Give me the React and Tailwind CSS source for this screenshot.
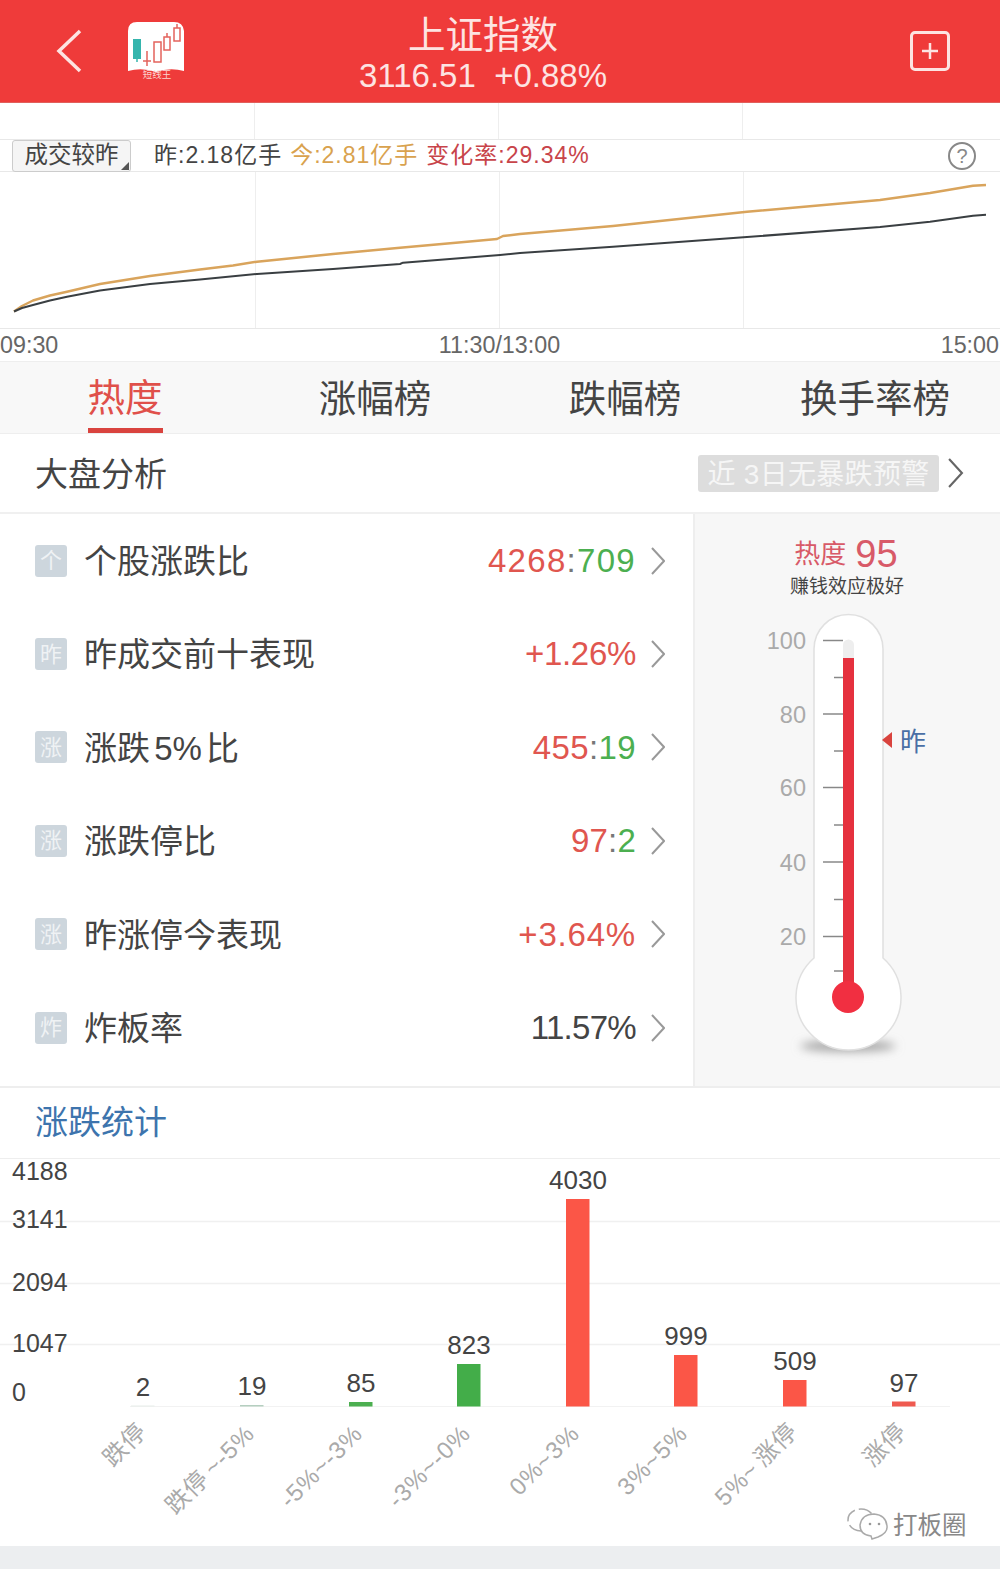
const ROWS = [
  { icon: "个", label: "个股涨跌比", value: [["4268", "text-[#e0564f]"], [":", "text-[#777]"], ["709", "text-[#4caf50]"]], cls: "tracking-[1.3px]" },
  { icon: "昨", label: "昨成交前十表现", value: [["+1.26%", "text-[#e0564f]"]], cls: "tracking-[-0.3px]" },
  { icon: "涨", label: "涨跌 5% 比", value: [["455", "text-[#e0564f]"], [":", "text-[#777]"], ["19", "text-[#4caf50]"]], cls: "tracking-[0.4px]" },
  { icon: "涨", label: "涨跌停比", value: [["97", "text-[#e0564f]"], [":", "text-[#777]"], ["2", "text-[#4caf50]"]], cls: "tracking-[0.2px]" },
  { icon: "涨", label: "昨涨停今表现", value: [["+3.64%", "text-[#e0564f]"]], cls: "tracking-[0.8px]" },
  { icon: "炸", label: "炸板率", value: [["11.57%", "text-[#444]"]], cls: "tracking-[-0.7px]" },
];

const TABS = ["热度", "涨幅榜", "跌幅榜", "换手率榜"];

const ORANGE = "14,311.5 22,306 33,300.5 50,295.5 67,291.7 100,284 150,276 200,269.500 233,265.500 257,261.7 333,254 400,247.7 467,241.7 497,239 503,236 520,234 613,226 747,211.7 880,200 930,193 973,185.7 986,185";
const BLACK = "14,311.5 22,308 33,305 50,300.5 67,296.7 100,290.500 150,284 200,279.500 257,274 333,269 400,264 403,262.7 500,255 520,253 613,246.7 747,237 880,227 930,221.7 973,215.7 986,214.7";

const BARS = [
  { x: 131, top: 1404.5, color: "#e8eeea", value: "2", labelY: 1395, name: "跌停", endX: 148, endY: 1432 },
  { x: 240, top: 1404, color: "#b5cfc0", value: "19", labelY: 1394, name: "跌停 ~-5%", endX: 256, endY: 1434 },
  { x: 349, top: 1401, color: "#4caf50", value: "85", labelY: 1391, name: "-5%~-3%", endX: 364, endY: 1434 },
  { x: 457, top: 1363, color: "#43ad49", value: "823", labelY: 1353, name: "-3%~-0%", endX: 472, endY: 1434 },
  { x: 566, top: 1198, color: "#fb5647", value: "4030", labelY: 1188, name: "0%~3%", endX: 581, endY: 1434 },
  { x: 674, top: 1354, color: "#fb5647", value: "999", labelY: 1344, name: "3%~5%", endX: 689, endY: 1434 },
  { x: 783, top: 1379, color: "#fb5647", value: "509", labelY: 1369, name: "5%~ 涨停", endX: 799, endY: 1432 },
  { x: 892, top: 1400.5, color: "#ef5a50", value: "97", labelY: 1391, name: "涨停", endX: 908, endY: 1432 },
];

function Chevron({ className }) {
  return (
    <svg className={className} viewBox="0 0 14 28" fill="none" stroke="currentColor" strokeWidth="2">
      <path d="M1 1 L13 14 L1 27" />
    </svg>
  );
}

function Logo() {
  return (
    <svg width="58" height="58" viewBox="128 23 58 58" className="ml-[46px] shrink-0">
      <path d="M137 23 H174 Q183 23 184 32 V72 Q170 68 156 73 Q142 68 128 72 V32 Q128 23 137 23 Z" fill="#fff" />
      <path d="M137 60 V63" stroke="#35b5ad" strokeWidth="1.5" />
      <rect x="133" y="40" width="8" height="20" fill="#35b5ad" />
      <path d="M147 52 V67 M143 62 H151" stroke="#e4635c" strokeWidth="1.5" />
      <rect x="154" y="43" width="7" height="20" fill="#fff" stroke="#e4635c" strokeWidth="1.5" />
      <rect x="164" y="38" width="6" height="13" fill="#fff" stroke="#e4635c" strokeWidth="1.5" />
      <rect x="174" y="29" width="6" height="13" fill="#fff" stroke="#e4635c" strokeWidth="1.5" />
      <path d="M167 34 V38 M177 25 V29" stroke="#e4635c" strokeWidth="1.5" />
      <text x="157" y="79" textAnchor="middle" fontSize="9.500" fill="#fcd5d0">短线王</text>
    </svg>
  );
}

function Header() {
  return (
    <div className="h-[103px] bg-[#ef3b3a] flex items-center border-b border-[#e0605c]">
      <div className="w-[300px] flex items-center pl-[56px] shrink-0">
        <svg width="26" height="44" viewBox="0 0 26 44" fill="none" stroke="#fde4e2" strokeWidth="3.5" className="shrink-0">
          <path d="M24 2 L3 22 L24 42" />
        </svg>
        <Logo />
      </div>
      <div className="w-[366px] text-center text-[#fde4e2] pt-[5px]">
        <div className="text-[37.500px] leading-[44px]">上证指数</div>
        <div className="text-[33px] leading-[38px] whitespace-pre">3116.51  +0.88%</div>
      </div>
      <div className="flex-1 flex justify-end pr-[50px]">
        <div className="w-[40px] h-[40px] border-[3px] border-[#fde4e2] rounded-[5px] flex items-center justify-center">
          <svg width="18" height="18" viewBox="0 0 18 18" stroke="#fde4e2" strokeWidth="2.500">
            <path d="M9 1 V17 M1 9 H17" />
          </svg>
        </div>
      </div>
    </div>
  );
}

function VolumeChart() {
  return (
    <div>
      <div className="h-[37px] grid grid-cols-[255px_244px_244px_1fr] border-b border-[#e8e8e8]">
        <div className="border-r border-[#eeeeee]" />
        <div className="border-r border-[#eeeeee]" />
        <div className="border-r border-[#eeeeee]" />
        <div />
      </div>
      <div className="h-[32px] flex items-center border-b border-[#e8e8e8] text-[23px] whitespace-nowrap">
        <div className="relative ml-[12px] w-[119px] h-[32px] bg-[#f5f5f5] border border-[#cccccc] rounded-[3px] flex items-center justify-center text-[23.5px] text-[#444]">
          成交较昨
          <span className="absolute right-[1px] bottom-[1px] w-0 h-0 border-l-[8px] border-l-transparent border-b-[8px] border-b-[#555]" />
        </div>
        <span className="ml-[23px] text-[#444] tracking-[1px]">昨:2.18亿手</span>
        <span className="ml-[8px] text-[#d9a24e] tracking-[1px]">今:2.81亿手</span>
        <span className="ml-[8px] text-[#c8444a] tracking-[1px]">变化率:29.34%</span>
        <svg width="30" height="30" viewBox="0 0 30 30" className="ml-auto mr-[23px]" fill="none">
          <circle cx="15" cy="15" r="13" stroke="#888" strokeWidth="2" />
          <text x="15" y="22" textAnchor="middle" fontSize="20" fill="#888">?</text>
        </svg>
      </div>
      <svg className="block w-full h-[157px]" viewBox="0 172 1000 157">
        <path d="M255.500 172 V328 M499.500 172 V328 M743.500 172 V328" stroke="#eeeeee" />
        <path d="M0 328.500 H1000" stroke="#e8e8e8" />
        <polyline points={ORANGE} fill="none" stroke="#d9a45c" strokeWidth="2.500" strokeLinejoin="round" />
        <polyline points={BLACK} fill="none" stroke="#3a3f42" strokeWidth="2" strokeLinejoin="round" />
      </svg>
      <div className="h-[32px] flex items-center justify-between text-[23.300px] text-[#666] pr-[1px] pt-[1px]">
        <span>09:30</span>
        <span>11:30/13:00</span>
        <span>15:00</span>
      </div>
    </div>
  );
}

function Tabs() {
  return (
    <div className="h-[73px] grid grid-cols-4 bg-[#f8f8f8] border-y border-[#eeeeee]">
      {TABS.map((tab, i) => (
        <div key={tab} className="flex justify-center">
          <div className={`h-full flex items-center text-[37.500px] ${i === 0 ? "text-[#e0504a] border-b-[5px] border-[#d9433e] pt-[7px]" : "text-[#444] pt-[4px]"}`}>
            {tab}
          </div>
        </div>
      ))}
    </div>
  );
}

function MarketHead() {
  return (
    <div className="h-[80px] flex items-center pl-[35px] border-b-2 border-[#f0f0f0]">
      <span className="text-[33px] text-[#444] pt-[3px]">大盘分析</span>
      <span className="ml-auto h-[37px] w-[241px] bg-[#dddddd] rounded-[3px] text-[28px] tracking-[0.3px] text-[#f6f6f6] flex items-center justify-center whitespace-pre pt-[3px]">
        近 3日无暴跌预警
      </span>
      <Chevron className="w-[19px] h-[30px] ml-[7px] mr-[35px] text-[#666]" />
    </div>
  );
}

function StatRow({ row }) {
  return (
    <div className="h-[93.400px] flex items-center pl-[35px] pr-[28px]">
      <span className="w-[32px] h-[32px] rounded-[3px] bg-[#cdd6dd] text-white/70 text-[22px] flex items-center justify-center">
        {row.icon}
      </span>
      <span className="ml-[17px] pt-[2px] text-[33px] text-[#444] whitespace-pre [word-spacing:-5px]">{row.label}</span>
      <span className={`ml-auto text-[33px] ${row.cls}`}>
        {row.value.map(([text, color], i) => (
          <span key={i} className={color}>{text}</span>
        ))}
      </span>
      <Chevron className="w-[14px] h-[28px] ml-[15px] text-[#999]" />
    </div>
  );
}

function Thermometer() {
  const major = [[640.5, "100"], [714, "80"], [787.5, "60"], [862, "40"], [936.5, "20"]];
  const minor = [677.5, 751, 825, 899.5, 971];
  return (
    <svg className="block w-[306px] h-[479px]" viewBox="694 606 306 479">
      <defs>
        <filter id="bulbShadow" x="-30%" y="-150%" width="160%" height="400%">
          <feGaussianBlur stdDeviation="5" />
        </filter>
      </defs>
      <ellipse cx="847" cy="1046" rx="48" ry="6" fill="#a8a8a8" filter="url(#bulbShadow)" />
      <path
        d="M813 958 V649 A34.500 34.500 0 0 1 882 649 V958 A52.500 52.500 0 1 1 813 958 Z"
        fill="#fff"
        stroke="#e0e0e0"
        strokeWidth="1.500"
      />
      {major.map(([y, text]) => (
        <g key={text}>
          <path d={`M822 ${y} H842`} stroke="#888" strokeWidth="1.500" />
          <text x="805" y={y + 8.5} textAnchor="end" fontSize="23.500" fill="#aaaaaa">{text}</text>
        </g>
      ))}
      {minor.map((y) => (
        <path key={y} d={`M833 ${y} H842`} stroke="#888" strokeWidth="1.500" />
      ))}
      <path d="M842 660 V645 A5.500 5.500 0 0 1 853 645 V660 Z" fill="#eeeeee" />
      <rect x="842" y="658" width="11" height="330" fill="#e5313e" />
      <circle cx="847" cy="997" r="16" fill="#f12f41" />
      <path d="M891 732 V748 L881 740 Z" fill="#d9433e" />
      <text x="899" y="751" fontSize="26" fill="#4a6fa5">昨</text>
    </svg>
  );
}

function HeatPanel() {
  return (
    <div className="flex-1 bg-[#f7f7f7] border-l-2 border-[#eeeeee]">
      <div className="h-[92px] pt-[18px] text-center">
        <div className="h-[44px] flex items-center justify-center text-[#d85a68] pr-[4px]">
          <span className="text-[26px]">热度</span>
          <span className="ml-[9px] text-[38px]">95</span>
        </div>
        <div className="text-[19px] leading-[24px] text-[#444] -mt-[1px] pr-[2px]">赚钱效应极好</div>
      </div>
      <Thermometer />
    </div>
  );
}

function StatsChart() {
  const gridY = [1220.5, 1282.5, 1343.5];
  const yLabels = [["4188", 1179], ["3141", 1227], ["2094", 1289.5], ["1047", 1350.5], ["0", 1399.5]];
  return (
    <svg className="block w-full h-[387px] overflow-visible" viewBox="0 1158 1000 387">
      {gridY.map((y) => (
        <path key={y} d={`M0 ${y} H1000`} stroke="#f0f0f0" strokeWidth="1.500" />
      ))}
      <path d="M130 1405.500 H950" stroke="#f2f2f2" />
      {yLabels.map(([text, y]) => (
        <text key={text} x="12" y={y} fontSize="25" fill="#444">{text}</text>
      ))}
      {BARS.map((bar) => (
        <g key={bar.name}>
          <rect x={bar.x} y={bar.top} width="23.500" height={1405.5 - bar.top} fill={bar.color} />
          <text x={bar.x + 12} y={bar.labelY} textAnchor="middle" fontSize="26" fill="#444">{bar.value}</text>
          <text
            x={bar.endX}
            y={bar.endY}
            textAnchor="end"
            fontSize="24"
            letterSpacing="0.8"
            wordSpacing="-3"
            fill="#aaaaaa"
            transform={`rotate(-45 ${bar.endX} ${bar.endY})`}
          >
            {bar.name}
          </text>
        </g>
      ))}
      {/* watermark */}
      <g fill="#fff" stroke="#aaaaaa" strokeWidth="1.500">
        <ellipse cx="861" cy="1519" rx="13" ry="11" strokeDasharray="14 4" />
        <path d="M872 1538 L878 1536 Q888 1532 887 1525 Q886 1514 874 1513 Q862 1513 860 1524 Q860 1534 871 1535 Z" />
      </g>
      <circle cx="870" cy="1523" r="1.300" fill="#999" />
      <circle cx="879" cy="1523" r="1.300" fill="#999" />
      <text x="893" y="1533" fontSize="24.500" fill="#888">打板圈</text>
    </svg>
  );
}

export default function App() {
  return (
    <div className="w-[1000px] h-[1569px] overflow-hidden bg-white font-['Liberation_Sans','Noto_Sans_CJK_SC',sans-serif]">
      <Header />
      <VolumeChart />
      <Tabs />
      <MarketHead />
      <div className="h-[574px] flex border-b-2 border-[#eeeeee]">
        <div className="w-[693px] shrink-0">
          {ROWS.map((row) => (
            <StatRow key={row.label} row={row} />
          ))}
        </div>
        <HeatPanel />
      </div>
      <div className="h-[71px] flex items-center pl-[35px] border-b border-[#eeeeee] text-[33px] text-[#3d74ad]">
        涨跌统计
      </div>
      <StatsChart />
      <div className="h-[24px] bg-[#eceef0]" />
    </div>
  );
}
